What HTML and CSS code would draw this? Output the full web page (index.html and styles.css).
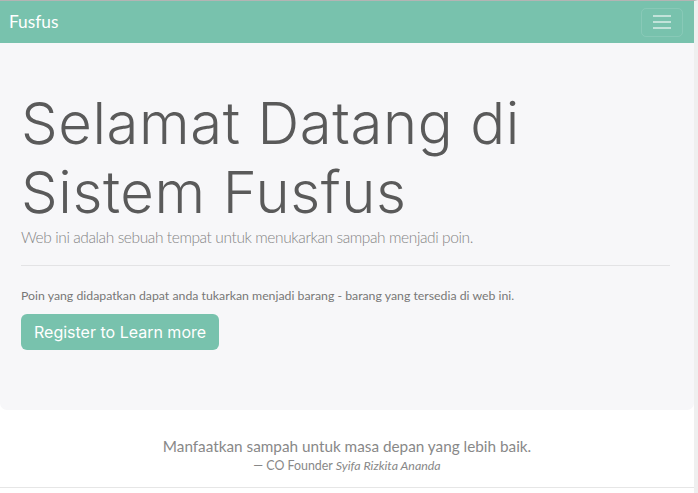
FILE: index.html
```html
<!DOCTYPE html>
<html>
<head>
<meta charset="utf-8">
<link rel="stylesheet" href="styles.css">
</head>
<body>
<nav class="navbar">
  <a class="brand" href="#">Fusfus</a>
  <button class="toggler" aria-label="menu">
    <span class="bar"></span><span class="bar"></span><span class="bar"></span>
  </button>
</nav>
<main>
  <section class="jumbotron">
    <h1 class="display">Selamat Datang di Sistem Fusfus</h1>
    <p class="lead">Web ini adalah sebuah tempat untuk menukarkan sampah menjadi poin.</p>
    <hr class="divider">
    <p class="note">Poin yang didapatkan dapat anda tukarkan menjadi barang - barang yang tersedia di web ini.</p>
    <div class="actions">
      <a class="btn" href="#">Register to Learn more</a>
    </div>
  </section>
  <section class="quote">
    <p class="quote-text">Manfaatkan sampah untuk masa depan yang lebih baik.</p>
    <p class="quote-footer">— CO Founder <cite>Syifa Rizkita Ananda</cite></p>
  </section>
</main>
</body>
</html>
```
FILE: styles.css
```css
* { box-sizing: border-box; }
html, body { margin: 0; padding: 0; }
body {
  font-family: "Lato", "Open Sans", sans-serif;
  color: #888;
  background: #fff;
  border-top: 1px solid #b4b4b4;
  border-right: 4px solid #efefef;
  min-height: 493px;
}
.navbar {
  height: 42px;
  background: #78c2ad;
  display: flex;
  align-items: center;
  justify-content: space-between;
  padding: 0 11px 0 9px;
}
.brand {
  color: #fff;
  text-decoration: none;
  font-size: 17.3px;
  line-height: 20px;
}
.toggler {
  width: 42px;
  height: 29px;
  border: 1px solid rgba(255,255,255,0.12);
  border-radius: 5px;
  background: transparent;
  display: flex;
  flex-direction: column;
  justify-content: center;
  align-items: center;
  gap: 4px;
  padding: 0;
}
.bar {
  display: block;
  width: 18px;
  height: 2px;
  background: rgba(255,255,255,0.55);
}
.jumbotron {
  background: #f7f7f9;
  padding: 46px 24px 60px 21px;
  border-radius: 0 0 7px 7px;
}
.display {
  margin: 0;
  font-family: "Inter", sans-serif;
  font-weight: 300;
  font-size: 58px;
  line-height: 69px;
  color: #5a5a5a;
  letter-spacing: 0.6px;
}
.lead {
  margin: 4px 0 0;
  font-size: 15.5px;
  line-height: 12px;
  font-weight: 300;
  letter-spacing: -0.4px;
  color: #858585;
}
.divider {
  border: 0;
  border-top: 1px solid #e3e3e5;
  margin: 22px 0 21px;
}
.note {
  margin: 0 0 9px;
  font-size: 12.3px;
  line-height: 18px;
  color: #777;
}
.actions { display: flex; }
.btn {
  display: block;
  background: #78c2ad;
  color: #fff;
  text-decoration: none;
  font-family: "Inter", sans-serif;
  font-size: 16px;
  line-height: 24px;
  padding: 6px 13px;
  border-radius: 6px;
}
.quote {
  text-align: center;
  padding: 25px 0 13px;
  border-bottom: 1px solid #e6e6e6;
}
.quote-text {
  margin: 0;
  font-size: 15.3px;
  line-height: 22px;
  color: #888;
}
.quote-footer {
  margin: 0;
  font-size: 12.4px;
  line-height: 17px;
  color: #888;
}
.quote-footer cite { font-style: italic; }
```
